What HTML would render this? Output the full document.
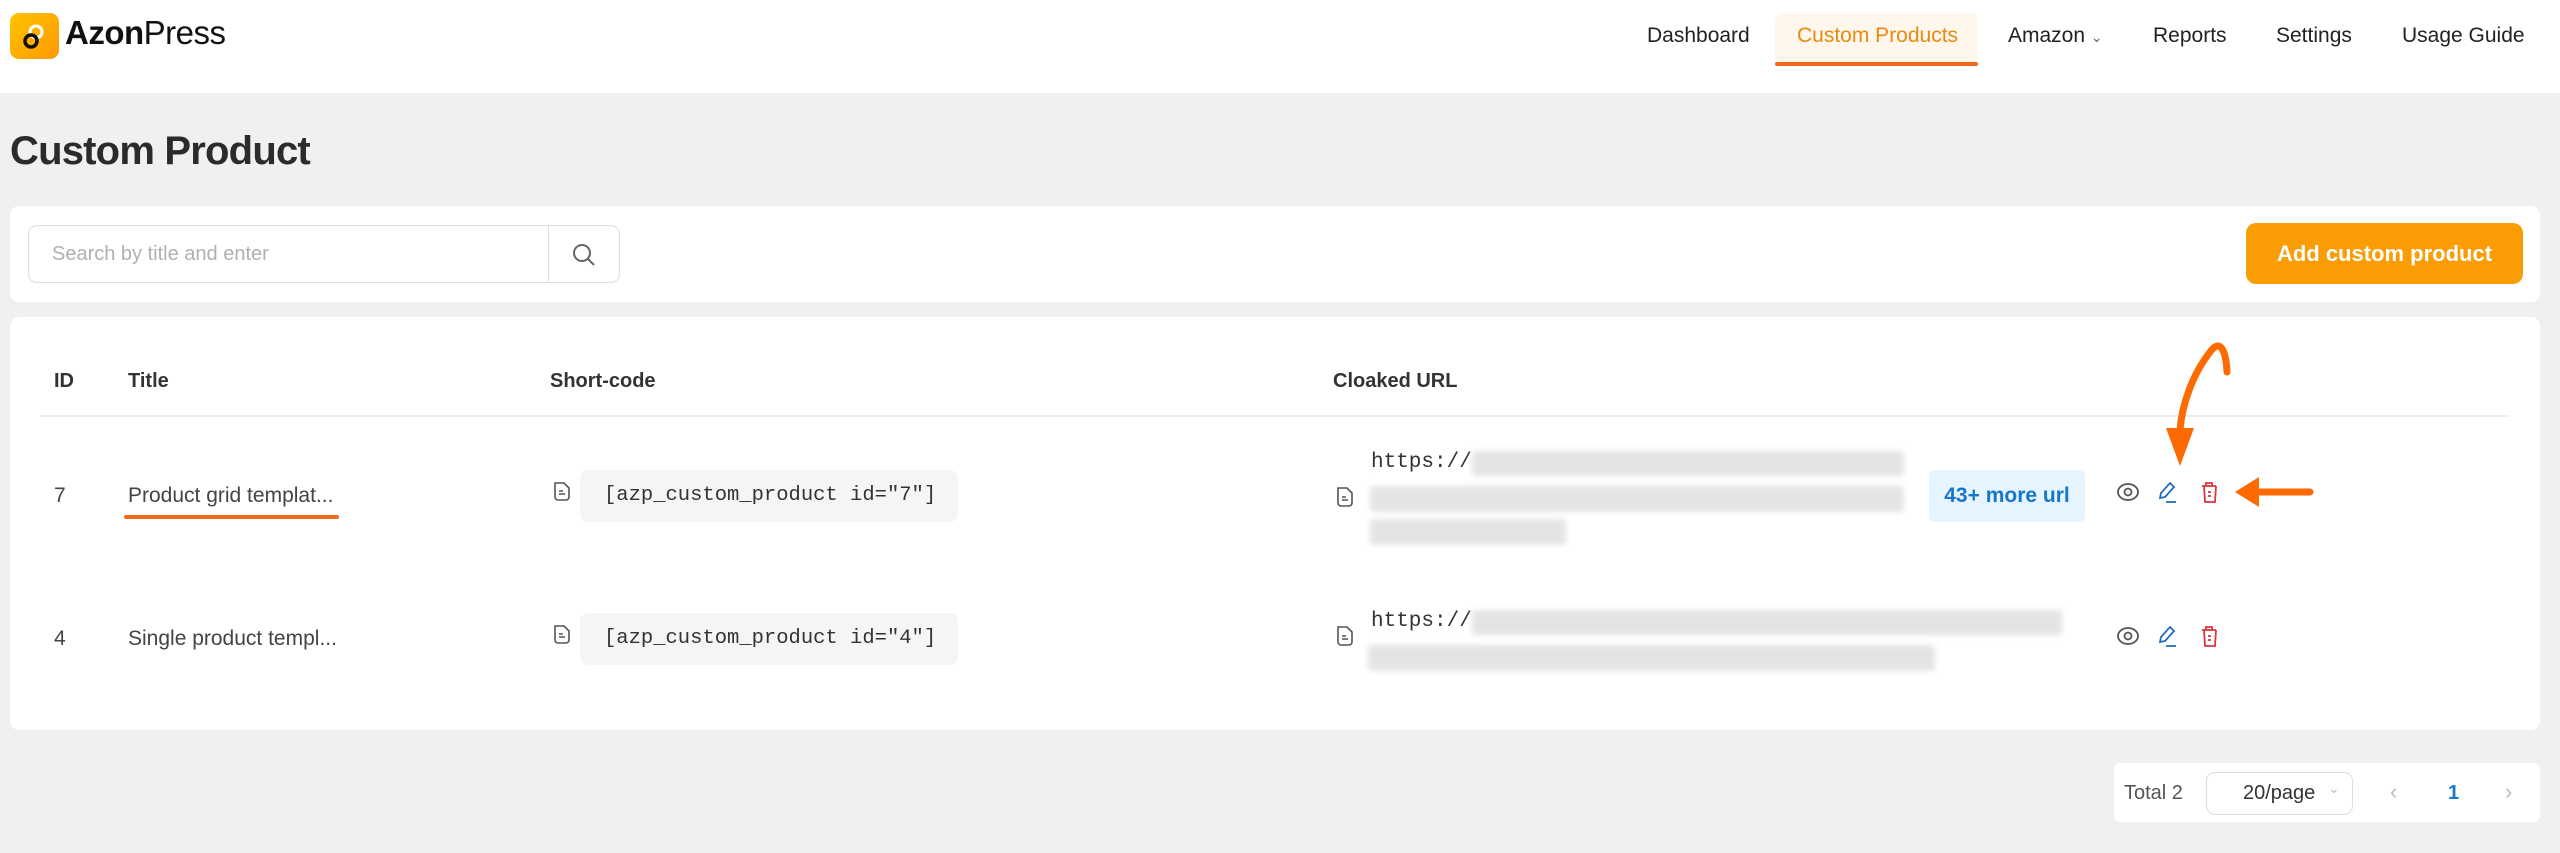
<!DOCTYPE html>
<html><head><meta charset="utf-8"><style>
*{margin:0;padding:0;box-sizing:border-box}
body{width:2560px;height:853px;background:#f0f0f0;font-family:"Liberation Sans",sans-serif;position:relative;overflow:hidden;color:#333}
.a{position:absolute}
.hdr{left:0;top:0;width:2560px;height:93px;background:#fff}
.nav{top:24px;font-size:21px;color:#222;white-space:nowrap}
.card{background:#fff;border-radius:9px}
.blur{background:#e4e4e4;filter:blur(3px);border-radius:4px}
.th{top:370px;font-size:20px;font-weight:bold;color:#333}
.td{font-size:21px;color:#444}
.code{background:#f3f5f7;border-radius:8px;font-family:"Liberation Mono",monospace;font-size:20.5px;color:#333;padding-left:24px;line-height:52px}
.mono{font-family:"Liberation Mono",monospace;font-size:21px;color:#333}
</style></head><body>
<div class="a hdr"></div>
<div class="a" style="left:10px;top:13px;width:49px;height:46px;border-radius:9px;background:linear-gradient(135deg,#ffc300,#ff9a00)">
<svg width="49" height="46" viewBox="0 0 49 46"><circle cx="26" cy="19" r="6" fill="none" stroke="#fff" stroke-width="3"/><circle cx="21" cy="28" r="6" fill="none" stroke="#111" stroke-width="3.5"/></svg></div>
<div class="a" style="left:65px;top:14px;font-size:33px;color:#111;letter-spacing:-0.5px"><b>Azon</b>Press</div>
<div class="a nav" style="left:1647px">Dashboard</div>
<div class="a" style="left:1775px;top:13px;width:203px;height:50px;background:#fff6ec;border-radius:8px"></div>
<div class="a" style="left:1775px;top:62px;width:203px;height:4px;background:#f06a1a;border-radius:2px"></div>
<div class="a nav" style="left:1797px;color:#e88a12">Custom Products</div>
<div class="a nav" style="left:2008px">Amazon <span style="font-size:14px;color:#666">&#8964;</span></div>
<div class="a nav" style="left:2153px">Reports</div>
<div class="a nav" style="left:2276px">Settings</div>
<div class="a nav" style="left:2402px">Usage Guide</div>

<div class="a" style="left:10px;top:129px;font-size:40px;font-weight:bold;color:#2b2b2b;letter-spacing:-0.8px">Custom Product</div>

<div class="a card" style="left:10px;top:206px;width:2530px;height:96px"></div>
<div class="a" style="left:28px;top:225px;width:592px;height:58px;border:1px solid #ddd;border-radius:9px"></div>
<div class="a" style="left:548px;top:226px;width:1px;height:56px;background:#ddd"></div>
<div class="a" style="left:52px;top:243px;font-size:20px;color:#b0b0b0">Search by title and enter</div>
<svg class="a" style="left:571px;top:242px" width="26" height="26" viewBox="0 0 26 26"><circle cx="11" cy="11" r="8" fill="none" stroke="#666" stroke-width="2"/><path d="M17 17l6 6" stroke="#666" stroke-width="2"/></svg>
<div class="a" style="left:2246px;top:223px;width:277px;height:61px;background:#fa9d05;border-radius:10px;color:#fff;font-weight:bold;font-size:22px;text-align:center;line-height:61px">Add custom product</div>

<div class="a card" style="left:10px;top:317px;width:2530px;height:413px"></div>
<div class="a th" style="left:54px">ID</div>
<div class="a th" style="left:128px">Title</div>
<div class="a th" style="left:550px">Short-code</div>
<div class="a th" style="left:1333px">Cloaked URL</div>
<div class="a" style="left:40px;top:415px;width:2470px;height:2px;background:#eee"></div>

<div class="a td" style="left:54px;top:484px">7</div>
<div class="a td" style="left:128px;top:484px">Product grid templat...</div>
<div class="a" style="left:124px;top:515px;width:215px;height:4px;background:#f06a1a;border-radius:2px"></div>
<div class="a td" style="left:54px;top:627px">4</div>
<div class="a td" style="left:128px;top:627px">Single product templ...</div>

<svg class="a" style="left:551px;top:480px" width="22" height="22" viewBox="0 0 22 22"><path d="M4 3h9l5 5v9a3 3 0 0 1-3 3H7a3 3 0 0 1-3-3z M8 11h4M8 14h6" fill="none" stroke="#555" stroke-width="1.6"/></svg>
<div class="a code" style="left:580px;top:470px;width:378px;height:52px">[azp_custom_product id="7"]</div>
<svg class="a" style="left:551px;top:623px" width="22" height="22" viewBox="0 0 22 22"><path d="M4 3h9l5 5v9a3 3 0 0 1-3 3H7a3 3 0 0 1-3-3z M8 11h4M8 14h6" fill="none" stroke="#555" stroke-width="1.6"/></svg>
<div class="a code" style="left:580px;top:613px;width:378px;height:52px">[azp_custom_product id="4"]</div>

<svg class="a" style="left:1334px;top:485px" width="22" height="24" viewBox="0 0 22 24"><path d="M4 3h9l5 5v10a3 3 0 0 1-3 3H7a3 3 0 0 1-3-3z M8 12h4M8 15h6" fill="none" stroke="#555" stroke-width="1.6"/></svg>
<div class="a mono" style="left:1371px;top:451px">https://</div>
<div class="a blur" style="left:1472px;top:451px;width:432px;height:25px"></div>
<div class="a blur" style="left:1370px;top:486px;width:534px;height:26px"></div>
<div class="a blur" style="left:1370px;top:519px;width:196px;height:26px"></div>
<div class="a" style="left:1929px;top:470px;width:156px;height:52px;background:#e6f4ff;border-radius:6px;color:#1677c8;font-weight:bold;font-size:21px;text-align:center;line-height:52px">43+ more url</div>

<svg class="a" style="left:1334px;top:624px" width="22" height="24" viewBox="0 0 22 24"><path d="M4 3h9l5 5v10a3 3 0 0 1-3 3H7a3 3 0 0 1-3-3z M8 12h4M8 15h6" fill="none" stroke="#555" stroke-width="1.6"/></svg>
<div class="a mono" style="left:1371px;top:610px">https://</div>
<div class="a blur" style="left:1472px;top:610px;width:590px;height:25px"></div>
<div class="a blur" style="left:1368px;top:645px;width:567px;height:26px"></div>

<svg class="a" style="left:2116px;top:478px" width="110" height="28" viewBox="0 0 110 28">
<ellipse cx="12" cy="14" rx="10" ry="8" fill="none" stroke="#555" stroke-width="1.8"/><circle cx="12" cy="14" r="3.5" fill="none" stroke="#555" stroke-width="1.8"/>
<path d="M54 5l4 4-9 10-5 1 1-5z" fill="none" stroke="#1f6fb8" stroke-width="1.8"/><path d="M50 24h10" stroke="#1f6fb8" stroke-width="1.8"/>
<path d="M86 8h14M90 8V5h6v3M88 8l1 16h10l1-16M92 14h3M92 18h3" fill="none" stroke="#d9363e" stroke-width="1.8"/>
</svg>
<svg class="a" style="left:2116px;top:622px" width="110" height="28" viewBox="0 0 110 28">
<ellipse cx="12" cy="14" rx="10" ry="8" fill="none" stroke="#555" stroke-width="1.8"/><circle cx="12" cy="14" r="3.5" fill="none" stroke="#555" stroke-width="1.8"/>
<path d="M54 5l4 4-9 10-5 1 1-5z" fill="none" stroke="#1f6fb8" stroke-width="1.8"/><path d="M50 24h10" stroke="#1f6fb8" stroke-width="1.8"/>
<path d="M86 8h14M90 8V5h6v3M88 8l1 16h10l1-16M92 14h3M92 18h3" fill="none" stroke="#d9363e" stroke-width="1.8"/>
</svg>

<svg class="a" style="left:2120px;top:330px" width="220" height="190" viewBox="0 0 220 190">
<path d="M107 42C106 20 100 8 90 22 C72 45 62 75 60 100" fill="none" stroke="#ff6a00" stroke-width="7" stroke-linecap="round"/>
<path d="M46 98h28l-14 38z" fill="#ff6a00"/>
<path d="M190 162h-62" stroke="#ff6a00" stroke-width="7" stroke-linecap="round"/>
<path d="M115 162l24-15v30z" fill="#ff6a00"/>
</svg>

<div class="a card" style="left:2114px;top:763px;width:426px;height:59px;border-radius:6px"></div>
<div class="a" style="left:2124px;top:782px;font-size:20px;color:#555">Total 2</div>
<div class="a" style="left:2206px;top:772px;width:147px;height:43px;border:1px solid #ddd;border-radius:9px"></div>
<div class="a" style="left:2243px;top:782px;font-size:20px;color:#333">20/page</div>
<div class="a" style="left:2328px;top:780px;font-size:14px;color:#bbb">&#8964;</div>
<div class="a" style="left:2390px;top:779px;font-size:22px;color:#bbb">&#8249;</div>
<div class="a" style="left:2448px;top:782px;font-size:20px;color:#1677c8;font-weight:bold">1</div>
<div class="a" style="left:2505px;top:779px;font-size:22px;color:#bbb">&#8250;</div>
</body></html>
